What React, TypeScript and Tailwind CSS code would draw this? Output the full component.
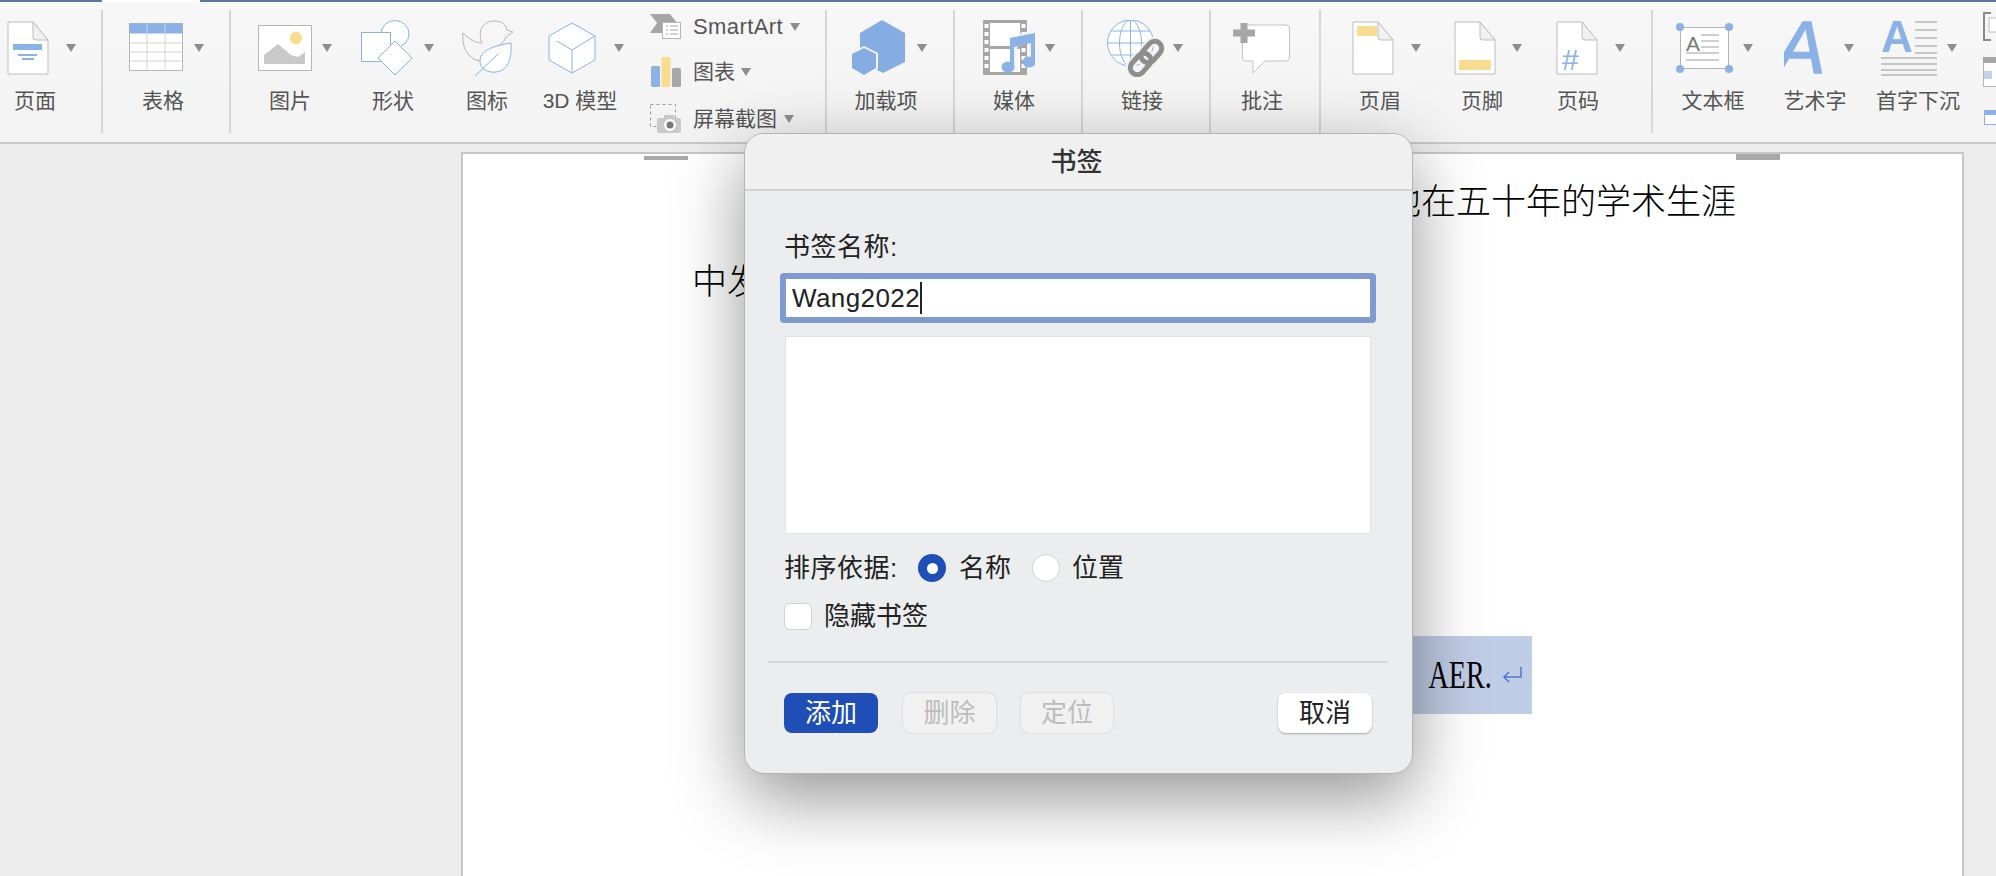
const BLUE = "#8ab2e6";
const YELLOW = "#f8dd90";
const GRAY = "#bdbdbd";

const Caret = ({ className = "" }: { className?: string }) => (
  <svg width="10" height="8" viewBox="0 0 10 8" className={"shrink-0 " + className}>
    <polygon points="0,0 10,0 5,8" fill="#8e8e8e" />
  </svg>
);

const Sep = ({ className = "" }: { className?: string }) => (
  <div className={"mt-[8px] h-[123px] w-[2px] shrink-0 bg-[#d6d6d6] " + className} />
);

type ToolProps = {
  label: string;
  width: string;
  pad: string;
  caret?: string;
  children: React.ReactNode;
};

const Tool = ({ label, width, pad, caret, children }: ToolProps) => (
  <div className={"shrink-0 pt-[18px] " + width}>
    <div className={"flex h-[56px] items-center " + pad}>
      {children}
      {caret && <Caret className={caret} />}
    </div>
    <div className="mt-[13px] whitespace-nowrap text-center text-[21px] leading-[24px] text-[#555]">{label}</div>
  </div>
);

const DocShape = ({ children }: { children?: React.ReactNode }) => (
  <svg width="42" height="54" viewBox="0 0 42 54" className="shrink-0">
    <path d="M1 1H26L41 19V53H1Z" fill="#fff" stroke={GRAY} />
    <path d="M26 1L41 19H29Q26 19 26 16Z" fill="#f1f1f1" stroke={GRAY} />
    {children}
  </svg>
);

const PageIcon = () => (
  <DocShape>
    <rect x="6" y="23" width="29" height="6" fill={BLUE} />
    <rect x="11" y="33" width="19" height="2" fill={BLUE} />
    <rect x="15" y="37" width="12" height="2" fill={BLUE} />
  </DocShape>
);

const TableIcon = () => (
  <svg width="54" height="50" viewBox="0 0 54 50" className="shrink-0">
    <rect x="0.5" y="0.5" width="53" height="47" fill="#fff" stroke="#b5b5b5" />
    <rect x="0.5" y="0.5" width="53" height="10" fill={BLUE} />
    <path d="M18 1V47M36 1V47M1 20H53M1 29H53M1 38H53" stroke="#d4d4d4" />
    <path d="M18 1V10M36 1V10" stroke="#a9c6ec" />
  </svg>
);

const PictureIcon = () => (
  <svg width="54" height="47" viewBox="0 0 54 47" className="shrink-0">
    <rect x="0.5" y="0.5" width="53" height="45" fill="#fff" stroke="#b5b5b5" />
    <ellipse cx="38" cy="13" rx="6" ry="6.5" fill={YELLOW} />
    <path d="M6 39V30L20 19L33 30L40 32L47 27V39Z" fill="#c9c9c9" />
  </svg>
);

const ShapesIcon = () => (
  <svg width="52" height="56" viewBox="0 0 52 56" className="shrink-0" stroke={BLUE} fill="#fff">
    <ellipse cx="34" cy="14" rx="14" ry="13.5" />
    <rect x="0.5" y="12.5" width="29" height="29" />
    <polygon points="34,21 51,38 34,55 17,38" />
  </svg>
);

const IconsIcon = () => (
  <svg width="52" height="57" viewBox="0 0 52 57" className="shrink-0" fill="none">
    <path d="M1 13C8 20 14 23 20 23C15 11 21 1 32 1C40 1 44 5 45 10L51 12L44 17C43 20 41 23 38 25M1 13C-1 30 9 42 22 41" stroke="#b5b5b5" />
    <path d="M49 23C36 25 18 29 18 41C18 49 26 53 34 52C45 51 50 40 49 23Z" fill="#fff" stroke={BLUE} />
    <path d="M13 56L36 34" stroke={BLUE} />
  </svg>
);

const CubeIcon = () => (
  <svg width="48" height="52" viewBox="0 0 48 52" className="shrink-0" stroke={BLUE} fill="#fff">
    <polygon points="24,1 47,14 47,38 24,51 1,38 1,14" />
    <path d="M24 51V28L47 14M24 28L9 19" fill="none" />
  </svg>
);

const SmartArtIcon = () => (
  <svg width="32" height="26" viewBox="0 0 32 26">
    <polygon points="0,0 20,0 28,10 22,19 0,19 7,9" fill="#a6a6a6" />
    <rect x="12.5" y="8.5" width="18" height="16" fill="#fff" stroke="#b5b5b5" />
    <path d="M16 12H18M20 12H28M16 16H18M20 16H28M16 20H18M20 20H28" stroke="#a6a6a6" />
  </svg>
);

const ChartIcon = () => (
  <svg width="32" height="31" viewBox="0 0 32 31">
    <rect x="1" y="9" width="9" height="21" rx="1.5" fill={BLUE} />
    <rect x="11.5" y="0" width="9" height="30" rx="1.5" fill={YELLOW} />
    <rect x="22" y="11" width="9" height="19" rx="1.5" fill="#a8a8a8" />
  </svg>
);

const ScreenshotIcon = () => (
  <svg width="32" height="30" viewBox="0 0 32 30">
    <rect x="0.5" y="0.5" width="25" height="22" fill="none" stroke="#9a9a9a" strokeDasharray="3 3" />
    <rect x="7" y="14" width="24" height="15" rx="2" fill="#c9c9c9" />
    <rect x="14" y="11" width="10" height="4" fill="#c9c9c9" />
    <circle cx="20" cy="21" r="6" fill="#fff" />
    <circle cx="20" cy="21" r="3.5" fill="#777" />
  </svg>
);

const AddinIcon = () => (
  <svg width="53" height="56" viewBox="0 0 53 56" className="shrink-0">
    <polygon points="30,0 53,13 53,42 31,53 8,42 8,13" fill="#85ade3" />
    <polygon points="12,26 26,33 26,49 12,57 -2,49 -2,33" fill="#f5f5f5" />
    <polygon points="12,28 24,34 24,48 12,55 0,48 0,34" fill="#85ade3" />
  </svg>
);

const MediaIcon = () => (
  <svg width="52" height="56" viewBox="0 0 52 56" className="shrink-0">
    <rect x="0" y="0" width="44" height="55" rx="1" fill="#a6a6a6" />
    <rect x="7" y="3" width="30" height="23" fill="#fff" />
    <rect x="7" y="29" width="30" height="23" fill="#fff" />
    <path d="M3.5 4V52M40.5 4V52" stroke="#fff" strokeWidth="4" strokeDasharray="4 4" />
    <path d="M31 51V19L52 13V44" fill="none" stroke="#f3f3f3" strokeWidth="7" />
    <polygon points="27,18 52,13 52,22 27,28" fill={BLUE} />
    <rect x="27" y="20" width="4" height="27" fill={BLUE} />
    <rect x="48" y="15" width="4" height="27" fill={BLUE} />
    <ellipse cx="25" cy="47" rx="6.5" ry="5.5" fill={BLUE} />
    <ellipse cx="46" cy="42" rx="6.5" ry="5.5" fill={BLUE} />
  </svg>
);

const LinkIcon = () => (
  <svg width="58" height="57" viewBox="0 0 58 57" className="shrink-0" fill="none">
    <g stroke={BLUE}>
      <circle cx="23.5" cy="23" r="23" fill="#fff" />
      <ellipse cx="23.5" cy="23" rx="11" ry="23" />
      <path d="M23.5 0V46M1 23H46M4 11H43M4 35H43" />
    </g>
    <g stroke="#f3f3f3" strokeWidth="9" transform="rotate(-48 39 38)">
      <rect x="19" y="31" width="24" height="14" rx="7" />
      <rect x="35" y="31" width="24" height="14" rx="7" />
    </g>
    <g stroke="#8e8e8e" strokeWidth="5" transform="rotate(-48 39 38)">
      <rect x="19" y="31" width="24" height="14" rx="7" />
      <rect x="35" y="31" width="24" height="14" rx="7" />
    </g>
  </svg>
);

const CommentIcon = () => (
  <svg width="57" height="52" viewBox="0 0 57 52" className="shrink-0">
    <path d="M12 3H53Q56.500 3 56.500 7V35Q56.500 39 53 39H32L20 51V39H13Q9.500 39 9.500 35V7Q9.500 3 12 3Z" fill="#fff" stroke="#c2c2c2" />
    <path d="M7.500 1H14.500V7.500H22V14.500H14.500V21H7.500V14.500H0V7.500H7.500Z" fill="#a6a6a6" />
  </svg>
);

const TextBoxIcon = () => (
  <svg width="57" height="50" viewBox="0 0 57 50" className="shrink-0">
    <rect x="4.500" y="4.500" width="48" height="41" fill="#fff" stroke="#b5b5b5" />
    <path d="M25 12H43M25 18H43M25 24H43M10 30H43M10 37H43" stroke="#cfcfcf" strokeWidth="2" />
    <text x="10" y="28" fontSize="21" fill="#777" fontFamily="Liberation Sans">A</text>
    {[[4, 4], [53, 4], [4, 46], [53, 46]].map(([x, y]) => (
      <circle key={x + "-" + y} cx={x} cy={y} r="4" fill={BLUE} />
    ))}
  </svg>
);

const WordArtIcon = () => (
  <svg width="46" height="54" viewBox="0 0 46 54" className="shrink-0">
    <text x="-8" y="52" fontSize="74" fontStyle="italic" fill={BLUE} stroke={BLUE} strokeWidth="1.500" fontFamily="Liberation Sans">A</text>
  </svg>
);

const DropCapIcon = () => (
  <svg width="56" height="56" viewBox="0 0 56 56" className="shrink-0">
    <text x="0" y="32" fontSize="44" fontWeight="700" fill={BLUE} fontFamily="Liberation Sans">A</text>
    <path d="M34 2H56M34 10H56M34 18H56M34 26H56M34 33H56M0 38H56M0 44H56M0 50H56M0 55H56" stroke="#c6c6c6" strokeWidth="2" />
  </svg>
);

const EdgeIcons = () => (
  <div className="flex-1 overflow-hidden pl-[4px] pt-[10px]">
    <svg width="20" height="30" viewBox="0 0 20 30" className="block">
      <path d="M8 1H1V28H8" fill="none" stroke="#8a8a8a" strokeWidth="2" />
      <rect x="6" y="6" width="14" height="14" fill="#fff" stroke="#bbb" />
    </svg>
    <svg width="20" height="30" viewBox="0 0 20 30" className="mt-[15px] block">
      <rect x="0.500" y="0.500" width="19" height="29" fill="#fff" stroke="#b5b5b5" />
      <rect x="0" y="0" width="20" height="6" fill="#a6a6a6" />
      <rect x="1" y="14" width="8" height="8" fill="#c3d0ea" />
    </svg>
    <svg width="20" height="18" viewBox="0 0 20 18" className="ml-[1px] mt-[22px] block">
      <rect x="0.500" y="1.500" width="19" height="14" fill="#fff" stroke={BLUE} />
      <rect x="0" y="1" width="20" height="5" fill={BLUE} />
    </svg>
  </div>
);

const Ribbon = () => (
  <div className="flex h-[140px] shrink-0 overflow-hidden bg-gradient-to-b from-[#f7f7f7] to-[#f3f3f3]">
    <Tool label="页面" width="w-[70px]" pad="pl-[7px]" caret="ml-[17px]"><PageIcon /></Tool>
    <Sep className="ml-[31px]" />
    <Tool label="表格" width="w-[120px]" pad="pl-[26px]" caret="ml-[11px]"><TableIcon /></Tool>
    <Sep className="ml-[6px]" />
    <Tool label="图片" width="w-[118px]" pad="pl-[27px]" caret="ml-[10px]"><PictureIcon /></Tool>
    <Tool label="形状" width="w-[88px]" pad="pl-[12px]" caret="ml-[11px]"><ShapesIcon /></Tool>
    <Tool label="图标" width="w-[100px]" pad="pl-[25px]"><IconsIcon /></Tool>
    <Tool label="3D 模型" width="w-[86px]" pad="pl-[11px]" caret="ml-[18px]"><CubeIcon /></Tool>
    <div className="w-[202px] shrink-0 pl-[27px] pt-[10px] text-[21px] leading-[30px] text-[#555]">
      <div className="flex h-[30px] items-center">
        <div className="w-[43px]"><SmartArtIcon /></div>
        <span className="font-['Liberation_Sans'] text-[22px] tracking-[0.4px]">SmartArt</span>
        <Caret className="ml-[7px]" />
      </div>
      <div className="mt-[15px] flex h-[30px] items-center">
        <div className="w-[43px]"><ChartIcon /></div>
        <span>图表</span>
        <Caret className="ml-[6px]" />
      </div>
      <div className="mt-[17px] flex h-[30px] items-center">
        <div className="w-[43px]"><ScreenshotIcon /></div>
        <span>屏幕截图</span>
        <Caret className="ml-[7px]" />
      </div>
    </div>
    <Sep />
    <Tool label="加载项" width="w-[118px]" pad="pl-[25px]" caret="ml-[12px]"><AddinIcon /></Tool>
    <Sep className="ml-[8px]" />
    <Tool label="媒体" width="w-[118px]" pad="pl-[28px]" caret="ml-[10px]"><MediaIcon /></Tool>
    <Sep className="ml-[8px]" />
    <Tool label="链接" width="w-[118px]" pad="pl-[24px]" caret="ml-[8px]"><LinkIcon /></Tool>
    <Sep className="ml-[8px]" />
    <Tool label="批注" width="w-[102px]" pad="pl-[22px]"><CommentIcon /></Tool>
    <Sep className="ml-[6px]" />
    <Tool label="页眉" width="w-[118px]" pad="pl-[31px]" caret="ml-[17px]">
      <DocShape><rect x="5" y="5" width="20" height="10" fill={YELLOW} /></DocShape>
    </Tool>
    <Tool label="页脚" width="w-[86px]" pad="pl-[15px]" caret="ml-[16px]">
      <DocShape><rect x="5" y="39" width="32" height="10" fill={YELLOW} /></DocShape>
    </Tool>
    <Tool label="页码" width="w-[106px]" pad="pl-[31px]" caret="ml-[17px]">
      <DocShape>
        <text x="6" y="49" fontSize="30" fill={BLUE} fontFamily="Liberation Sans">#</text>
      </DocShape>
    </Tool>
    <Sep className="ml-[20px]" />
    <Tool label="文本框" width="w-[120px]" pad="pl-[23px]" caret="ml-[10px]"><TextBoxIcon /></Tool>
    <Tool label="艺术字" width="w-[84px]" pad="pl-[11px]" caret="ml-[14px]"><WordArtIcon /></Tool>
    <Tool label="首字下沉" width="w-[122px]" pad="pl-[24px]" caret="ml-[10px]"><DropCapIcon /></Tool>
    <EdgeIcons />
  </div>
);

const Page = () => (
  <div className="relative ml-[461px] mt-[8px] h-[800px] w-[1503px] shrink-0 border-2 border-[#c6c6c6] bg-white pt-[9px] font-['Liberation_Serif','Noto_Sans_CJK_SC',serif] text-[35px] font-light leading-[80px] text-black">
    <div className="absolute left-[181px] top-[2px] h-[4px] w-[44px] bg-[#a9a9a9]" />
    <div className="absolute left-[1273px] top-0 h-[6px] w-[44px] bg-[#a9a9a9]" />
    <div className="pl-[923px]">他在五十年的学术生涯</div>
    <div className="pl-[229px]">中发表</div>
    <div className="ml-[937px] mt-[313px] flex h-[78px] w-[132px] items-center justify-end bg-[#c0cde6] pr-[10px] leading-[78px]">
      <span className="origin-right scale-x-[0.72] text-[39px] font-normal">AER.</span>
      <svg width="20" height="17" viewBox="0 0 20 17" className="ml-[10px]" fill="none" stroke="#4a78d0" strokeWidth="1.500">
        <path d="M19 0V10H2M7 5L2 10L7 15" />
      </svg>
    </div>
  </div>
);

const Radio = ({ on }: { on?: boolean }) =>
  on ? (
    <div className="flex h-[28px] w-[28px] shrink-0 items-center justify-center rounded-full bg-[#1f4fb6]">
      <div className="h-[11px] w-[11px] rounded-full bg-white" />
    </div>
  ) : (
    <div className="h-[28px] w-[28px] shrink-0 rounded-full border border-[#d2d2d2] bg-white" />
  );

const Dialog = () => (
  <div className="absolute left-[744px] top-[133px] h-[641px] w-[669px] overflow-hidden rounded-[20px] border border-[#b4b4b4] bg-[#ecedef] text-[26px] leading-[34px] text-[#222] shadow-[0_24px_70px_rgba(0,0,0,0.42)]">
    <div className="flex h-[57px] items-center justify-center border-b-2 border-[#d2d2d2] bg-[#f0f0f0] pr-[4px] font-medium text-[#333]">书签</div>
    <div className="w-[628px] pl-[39px] pr-[1px] pt-[39px]">
      <div className="tracking-[0.5px]">书签名称:</div>
      <div className="-ml-[4px] mt-[9px] flex h-[50px] w-[596px] items-center rounded-[4px] border-[6px] border-[#7f9acf] bg-white pl-[6px] font-['Liberation_Sans'] tracking-[0.4px]">
        Wang2022
        <span className="h-[32px] w-[2px] bg-[#222]" />
      </div>
      <div className="ml-[1px] mt-[13px] h-[198px] w-[586px] border border-[#e2e2e2] bg-white" />
      <div className="mt-[17px] flex h-[34px] items-center">
        <div className="w-[134px] tracking-[0.5px]">排序依据:</div>
        <Radio on />
        <span className="ml-[13px] w-[73px]">名称</span>
        <Radio />
        <span className="ml-[12px]">位置</span>
      </div>
      <div className="mt-[14px] flex h-[34px] items-center">
        <div className="h-[27px] w-[28px] rounded-[6px] border border-[#d2d2d2] bg-white" />
        <span className="ml-[12px]">隐藏书签</span>
      </div>
      <div className="-ml-[16px] mt-[28px] h-[2px] w-[620px] bg-[#d5d6dc]" />
      <div className="mt-[30px] flex h-[40px] w-[588px] text-[26px] leading-[36px]">
        <button className="h-[40px] w-[94px] rounded-[8px] bg-[#1f4fb6] text-white">添加</button>
        <button className="ml-[25px] h-[40px] w-[93px] rounded-[8px] bg-[#f1f1f1] text-[#bcbcbc] shadow-[0_0_2px_rgba(0,0,0,0.2)]">删除</button>
        <button className="ml-[25px] h-[40px] w-[92px] rounded-[8px] bg-[#f1f1f1] text-[#bcbcbc] shadow-[0_0_2px_rgba(0,0,0,0.2)]">定位</button>
        <button className="ml-auto h-[40px] w-[94px] rounded-[8px] bg-white text-[#222] shadow-[0_1px_2px_rgba(0,0,0,0.3)]">取消</button>
      </div>
    </div>
  </div>
);

export default function App() {
  return (
    <div className="relative flex h-[876px] w-[1996px] flex-col overflow-hidden bg-[#ececec] font-['Liberation_Sans','Noto_Sans_CJK_SC',sans-serif]">
      <div className="flex h-[2px] shrink-0">
        <div className="w-[102px] bg-[#5a7aa6]" />
        <div className="w-[98px] bg-white" />
        <div className="flex-1 bg-[#5a7aa6]" />
      </div>
      <Ribbon />
      <div className="h-[2px] shrink-0 bg-[#c8c8c8]" />
      <Page />
      <Dialog />
    </div>
  );
}
